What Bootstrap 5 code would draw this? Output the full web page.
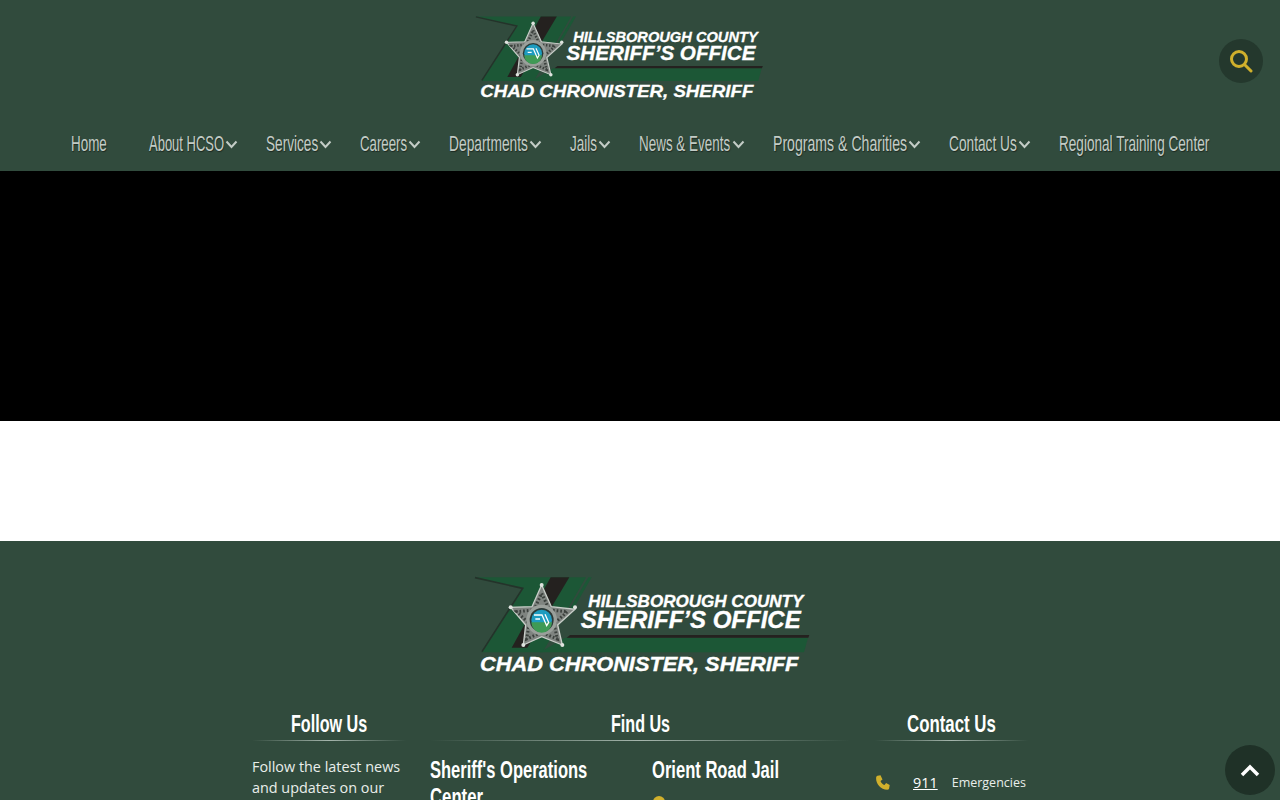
<!DOCTYPE html>
<html lang="en">
<head>
    <meta charset="UTF-8">
    <title>Hillsborough County Sheriff's Office</title>
    <link href="https://cdn.jsdelivr.net/npm/bootstrap@5.3.0/dist/css/bootstrap.min.css" rel="stylesheet">
    <style>
        html, body { height: 800px; overflow: hidden; }
        body { background: #fff; font-family: "Open Sans", sans-serif; }

        /* no condensed face here, so the headline text is narrowed by the script below */
        .squeeze {
            display: inline-block; white-space: nowrap; transform-origin: left center;
            font-family: "Liberation Sans", Arial, sans-serif;
        }

        .site-head { background: #314b3d; height: 171px; position: relative; }
        .head-logo { height: 118px; padding: 6px 0 0 463px; }
        .search-btn {
            position: absolute; top: 39px; left: 1219px;
            width: 44px; height: 44px; border-radius: 50%;
            background: #24382d; border: 0; padding: 0;
        }
        .main-menu { padding-left: 71px; gap: 42px; height: 50px; }
        .menu-item { position: relative; }
        .menu-item a {
            display: block; font-size: 22px; line-height: 26px; color: #c3ccc6;
            text-decoration: none; text-shadow: 1px 1px 1px #1d2a22;
        }
        .menu-chev { position: absolute; left: 100%; top: 11px; width: 13px; height: 9px; margin-left: 1px; }

        .black-band { background: #000; height: 250px; }
        .white-band { background: #fff; height: 120px; }

        .site-foot { background: #314b3d; height: 259px; overflow: hidden; color: #fff; }
        .foot-logo { height: 164px; padding: 24px 0 0 460px; }
        .foot-cols { padding-left: 252px; }
        .foot-col-a { width: 154px; margin-right: 24px; }
        .foot-col-b { width: 420px; margin-right: 25px; }
        .foot-col-c { width: 153px; }
        .foot-head { font-weight: 700; font-size: 24px; line-height: 32px; padding-top: 2px; text-align: center; margin: 0; }
        .foot-rule {
            height: 1px; margin-bottom: 15px;
            background: linear-gradient(90deg, transparent, #a5b5ac 50%, transparent);
        }
        .foot-text { font-size: 14.4px; line-height: 21px; color: #e9eeeb; margin: 0; white-space: nowrap; }
        .loc-col { flex: 0 0 222px; }
        .loc-name { font-weight: 700; font-size: 24px; line-height: 26px; margin: 0 0 13px; }
        .loc-line { font-size: 14.4px; line-height: 20px; color: #e9eeeb; }
        .loc-pin { width: 12px; height: 16px; margin: 0 10px 0 1px; }
        .phone-row { margin-top: 32px; line-height: 20px; }
        .phone-icon { width: 16px; height: 16px; margin-right: 22px; }
        .phone-num { font-size: 14.4px; color: #fff; margin-right: 14px; }
        .phone-label { font-size: 12.5px; color: #e9eeeb; }

        .to-top {
            position: fixed; left: 1225px; top: 745px;
            width: 50px; height: 50px; border-radius: 50%;
            background: #1f3127; border: 0; padding: 0;
        }
    </style>
</head>
<body>

<header class="site-head">
    <div class="head-logo">
        <svg class="d-block" width="309" height="103" viewBox="0 0 1080 360">
            <path d="M45 37H378L248 262H65L190 70z" fill="#1c5736"/>
            <path d="M385 37H395L330 150H318z" fill="#1c5736"/>
            <path d="M272 37H328L202 248H155z" fill="#24211f"/>
            <path d="M45 38L188 70L66 260" fill="none" stroke="#24332a" stroke-width="5"/>
            <path d="M315 218H1044L1032 262H240z" fill="#1c5736"/>
            <path d="M330 210H1048L1045 218H320z" fill="#24211f"/>
            <path d="M245 60L274 125L345 133L293 180L307 240L245 215L190 240L197 180L152 127L216 125z" fill="#7f8480" stroke="#c9cec9" stroke-width="4"/>
            <path d="M245 85L268 135L322 140L282 176L292 222L245 202L200 222L208 176L170 140L222 135z" fill="none" stroke="#3b403c" stroke-width="9" stroke-dasharray="5 6"/>
            <g fill="#dfe3df"><circle cx="245" cy="60" r="6"/><circle cx="345" cy="127" r="6"/><circle cx="152" cy="127" r="6"/><circle cx="307" cy="240" r="6"/><circle cx="190" cy="240" r="6"/></g>
            <circle cx="245" cy="165" r="46" fill="#9aa09b"/>
            <circle cx="245" cy="165" r="36" fill="#2c3a38"/>
            <circle cx="245" cy="165" r="31" fill="#1e9cc0"/>
            <path d="M214 172H276A31 31 0 0 1 214 172z" fill="#3f9a55"/>
            <path d="M222 150H246L260 182L266 172L255 148M226 162H240" fill="none" stroke="#fff" stroke-width="4"/>
            <g font-family="Liberation Sans" font-weight="700" font-style="italic" fill="#fff" stroke="#fff" stroke-width="1">
                <text x="385" y="125" font-size="49" textLength="645" lengthAdjust="spacingAndGlyphs">HILLSBOROUGH COUNTY</text>
                <text x="362" y="190" font-size="72" textLength="660" lengthAdjust="spacingAndGlyphs">SHERIFF’S OFFICE</text>
                <text x="60" y="318" font-size="58" textLength="955" lengthAdjust="spacingAndGlyphs">CHAD CHRONISTER, SHERIFF</text>
            </g>
        </svg>
    </div>
    <button class="search-btn d-flex align-items-center justify-content-center" aria-label="Search">
        <svg width="24" height="24" viewBox="0 0 24 24" fill="none" stroke="#d0b02c" stroke-width="3" stroke-linecap="round">
            <circle cx="10" cy="10" r="7.5"/><path d="M16 16l6 6"/>
        </svg>
    </button>
    <nav class="main-menu d-flex align-items-center">
        <div class="menu-item"><a href="#"><span class="squeeze" data-w="36">Home</span></a></div>
        <div class="menu-item"><a href="#"><span class="squeeze" data-w="75">About HCSO</span></a><svg class="menu-chev" viewBox="0 0 13 9"><path d="M1.5 1.5l5 5.5 5-5.5" fill="none" stroke="#c3ccc6" stroke-width="2"/></svg></div>
        <div class="menu-item"><a href="#"><span class="squeeze" data-w="52">Services</span></a><svg class="menu-chev" viewBox="0 0 13 9"><path d="M1.5 1.5l5 5.5 5-5.5" fill="none" stroke="#c3ccc6" stroke-width="2"/></svg></div>
        <div class="menu-item"><a href="#"><span class="squeeze" data-w="47">Careers</span></a><svg class="menu-chev" viewBox="0 0 13 9"><path d="M1.5 1.5l5 5.5 5-5.5" fill="none" stroke="#c3ccc6" stroke-width="2"/></svg></div>
        <div class="menu-item"><a href="#"><span class="squeeze" data-w="79">Departments</span></a><svg class="menu-chev" viewBox="0 0 13 9"><path d="M1.5 1.5l5 5.5 5-5.5" fill="none" stroke="#c3ccc6" stroke-width="2"/></svg></div>
        <div class="menu-item"><a href="#"><span class="squeeze" data-w="27">Jails</span></a><svg class="menu-chev" viewBox="0 0 13 9"><path d="M1.5 1.5l5 5.5 5-5.5" fill="none" stroke="#c3ccc6" stroke-width="2"/></svg></div>
        <div class="menu-item"><a href="#"><span class="squeeze" data-w="91">News &amp; Events</span></a><svg class="menu-chev" viewBox="0 0 13 9"><path d="M1.5 1.5l5 5.5 5-5.5" fill="none" stroke="#c3ccc6" stroke-width="2"/></svg></div>
        <div class="menu-item"><a href="#"><span class="squeeze" data-w="134">Programs &amp; Charities</span></a><svg class="menu-chev" viewBox="0 0 13 9"><path d="M1.5 1.5l5 5.5 5-5.5" fill="none" stroke="#c3ccc6" stroke-width="2"/></svg></div>
        <div class="menu-item"><a href="#"><span class="squeeze" data-w="68">Contact Us</span></a><svg class="menu-chev" viewBox="0 0 13 9"><path d="M1.5 1.5l5 5.5 5-5.5" fill="none" stroke="#c3ccc6" stroke-width="2"/></svg></div>
        <div class="menu-item"><a href="#"><span class="squeeze" data-w="150">Regional Training Center</span></a></div>
    </nav>
</header>

<div class="black-band"></div>
<div class="white-band"></div>

<footer class="site-foot">
    <div class="foot-logo">
        <svg class="d-block" width="360" height="120" viewBox="0 0 1080 360">
            <path d="M45 37H378L248 262H65L190 70z" fill="#1c5736"/>
            <path d="M385 37H395L330 150H318z" fill="#1c5736"/>
            <path d="M272 37H328L202 248H155z" fill="#24211f"/>
            <path d="M45 38L188 70L66 260" fill="none" stroke="#24332a" stroke-width="5"/>
            <path d="M315 218H1044L1032 262H240z" fill="#1c5736"/>
            <path d="M330 210H1048L1045 218H320z" fill="#24211f"/>
            <path d="M245 60L274 125L345 133L293 180L307 240L245 215L190 240L197 180L152 127L216 125z" fill="#7f8480" stroke="#c9cec9" stroke-width="4"/>
            <path d="M245 85L268 135L322 140L282 176L292 222L245 202L200 222L208 176L170 140L222 135z" fill="none" stroke="#3b403c" stroke-width="9" stroke-dasharray="5 6"/>
            <g fill="#dfe3df"><circle cx="245" cy="60" r="6"/><circle cx="345" cy="127" r="6"/><circle cx="152" cy="127" r="6"/><circle cx="307" cy="240" r="6"/><circle cx="190" cy="240" r="6"/></g>
            <circle cx="245" cy="165" r="46" fill="#9aa09b"/>
            <circle cx="245" cy="165" r="36" fill="#2c3a38"/>
            <circle cx="245" cy="165" r="31" fill="#1e9cc0"/>
            <path d="M214 172H276A31 31 0 0 1 214 172z" fill="#3f9a55"/>
            <path d="M222 150H246L260 182L266 172L255 148M226 162H240" fill="none" stroke="#fff" stroke-width="4"/>
            <g font-family="Liberation Sans" font-weight="700" font-style="italic" fill="#fff" stroke="#fff" stroke-width="1">
                <text x="385" y="125" font-size="49" textLength="645" lengthAdjust="spacingAndGlyphs">HILLSBOROUGH COUNTY</text>
                <text x="362" y="190" font-size="72" textLength="660" lengthAdjust="spacingAndGlyphs">SHERIFF’S OFFICE</text>
                <text x="60" y="318" font-size="58" textLength="955" lengthAdjust="spacingAndGlyphs">CHAD CHRONISTER, SHERIFF</text>
            </g>
        </svg>
    </div>
    <div class="foot-cols d-flex">
        <div class="foot-col-a">
            <h4 class="foot-head"><span class="squeeze" data-w="76">Follow Us</span></h4>
            <div class="foot-rule"></div>
            <p class="foot-text">Follow the latest news<br>and updates on our</p>
        </div>
        <div class="foot-col-b">
            <h4 class="foot-head"><span class="squeeze" data-w="59">Find Us</span></h4>
            <div class="foot-rule"></div>
            <div class="d-flex">
                <div class="loc-col">
                    <h5 class="loc-name"><span class="squeeze" data-w="157">Sheriff's Operations</span><br><span class="squeeze" data-w="53">Center</span></h5>
                </div>
                <div class="loc-col">
                    <h5 class="loc-name"><span class="squeeze" data-w="127">Orient Road Jail</span></h5>
                    <div class="loc-line d-flex align-items-start">
                        <svg class="loc-pin" viewBox="0 0 12 16"><path d="M6 0a6 6 0 0 0-6 6c0 4 6 10 6 10s6-6 6-10a6 6 0 0 0-6-6z" fill="#d0b02c"/></svg>
                        <span>1201 Orient Road</span>
                    </div>
                </div>
            </div>
        </div>
        <div class="foot-col-c">
            <h4 class="foot-head"><span class="squeeze" data-w="89">Contact Us</span></h4>
            <div class="foot-rule"></div>
            <div class="phone-row d-flex align-items-center">
                <svg class="phone-icon" viewBox="1 0 15 16"><path d="M3 .8l3-.6 2 4.2-2 1.5c.8 2 2.2 3.4 4 4.2l1.6-2 3.6 2-.6 3.4c-.2.8-1 1.2-1.6 1.2C6 14.5 1.4 9 1.6 3c0-1 .6-1.9 1.4-2.2z" fill="#d0b02c"/></svg>
                <a class="phone-num" href="#">911</a>
                <span class="phone-label">Emergencies</span>
            </div>
        </div>
    </div>
</footer>

<button class="to-top d-flex align-items-center justify-content-center" aria-label="Back to top">
    <svg width="20" height="14" viewBox="0 0 20 14"><path d="M2 12l8-8 8 8" fill="none" stroke="#fff" stroke-width="3.5"/></svg>
</button>

<script>
    // narrow each headline to the width given in data-w
    document.querySelectorAll(".squeeze").forEach(function (el) {
        const natural = el.offsetWidth;
        const wanted = Number(el.dataset.w);
        el.style.transform = "scaleX(" + (wanted / natural) + ")";
        el.style.marginRight = (wanted - natural) + "px";
    });
</script>

</body>
</html>
